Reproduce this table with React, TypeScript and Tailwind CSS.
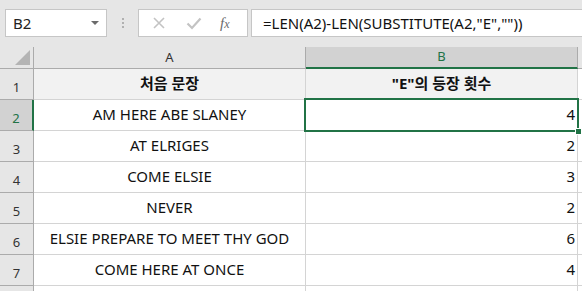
import { ChevronDown } from 'lucide-react';

const rows = [
  { a: 'AM HERE ABE SLANEY', b: 4 },
  { a: 'AT ELRIGES', b: 2 },
  { a: 'COME ELSIE', b: 3 },
  { a: 'NEVER', b: 2 },
  { a: 'ELSIE PREPARE TO MEET THY GOD', b: 6 },
  { a: 'COME HERE AT ONCE', b: 4 },
];

const font = { fontFamily: '"Noto Sans", "Noto Sans CJK KR", sans-serif' };

function FormulaBar() {
  return (
    <div className="h-[47px] flex-none flex items-start pt-[9px] pl-[5px] bg-[#e6e6e6]">
      <div className="w-[102px] h-[28px] bg-white border border-[#c6c6c6] flex items-center justify-between pl-[7px] pr-[5px]">
        <span className="text-[15px] text-[#222]">B2</span>
        <svg width="10" height="6" viewBox="0 0 10 6" className="mr-[1px]">
          <path d="M1 1h8L5 5z" fill="#6b6b6b" />
        </svg>
      </div>
      <div className="w-[31px] h-[28px] flex flex-col items-center justify-center gap-[2px]">
        <span className="w-[2px] h-[2px] bg-[#b0b0b0]" />
        <span className="w-[2px] h-[2px] bg-[#b0b0b0]" />
        <span className="w-[2px] h-[2px] bg-[#b0b0b0]" />
      </div>
      <div className="w-[110px] h-[28px] bg-white border border-[#c6c6c6] flex items-center">
        <svg width="14" height="14" viewBox="0 0 14 14" className="ml-[13px]">
          <path d="M2 2l10 10M12 2L2 12" stroke="#c3c3c3" strokeWidth="1.6" />
        </svg>
        <svg width="16" height="14" viewBox="0 0 16 14" className="ml-[20px]">
          <path d="M1.5 7.5l4.5 4.5 8.5-9.5" stroke="#c3c3c3" strokeWidth="2.2" fill="none" />
        </svg>
        <span
          className="ml-[18px] text-[15px] italic text-[#6b6b6b] leading-none"
          style={{ fontFamily: '"Liberation Serif", serif' }}
        >
          f<span className="text-[12px]">x</span>
        </span>
      </div>
      <div className="flex-1 h-[28px] ml-[3px] bg-white border border-[#c6c6c6] border-r-0 flex items-center pl-[11px]">
        <span className="text-[15px] text-[#111] whitespace-nowrap">
          =LEN(A2)-LEN(SUBSTITUTE(A2,"E",""))
        </span>
      </div>
    </div>
  );
}

function Corner() {
  return (
    <div className="h-[22px] w-[34px] bg-[#e6e6e6] border-r border-b border-[#ababab] relative">
      <svg width="15" height="15" viewBox="0 0 15 15" className="absolute right-[3px] bottom-[3px]">
        <path d="M15 0V15H0z" fill="#b4b4b4" />
      </svg>
    </div>
  );
}

export default function App() {
  return (
    <div className="w-[582px] h-[291px] overflow-hidden bg-white flex flex-col" style={font}>
      <FormulaBar />
      <div className="relative flex-1 overflow-hidden">
        <div className="grid grid-cols-[34px_272px_272px_4px]">
          {/* column headers */}
          <Corner />
          <div className="h-[22px] bg-[#e6e6e6] border-r border-b border-[#ababab] flex items-center justify-center text-[13px] text-[#333]">
            A
          </div>
          <div className="h-[22px] bg-[#d2d2d2] border-r border-[#ababab] border-b-2 border-b-[#217346] flex items-center justify-center text-[13px] text-[#217346]">
            B
          </div>
          <div className="h-[22px] bg-[#e6e6e6] border-b border-[#ababab]" />

          {/* row 1: table header */}
          <div className="h-[31px] bg-[#e6e6e6] border-r border-b border-[#ababab] flex items-end justify-center pb-[2px] text-[13px] text-[#333]">
            1
          </div>
          <div className="h-[31px] bg-[#f2f2f2] border-r border-b border-[#d4d4d4] flex items-end justify-center pb-[5px] text-[15px] font-bold text-[#111]">
            처음 문장
          </div>
          <div className="h-[31px] bg-[#f2f2f2] border-r border-b border-[#d4d4d4] flex items-end justify-center pb-[5px] text-[15px] font-bold text-[#111]">
            "E"의 등장 횟수
          </div>
          <div className="h-[31px] border-b border-[#d4d4d4]" />

          {rows.map((r, i) => {
            const active = i === 0;
            return [
              <div
                key={`h${i}`}
                className={
                  active
                    ? 'h-[31px] bg-[#d2d2d2] border-r-2 border-r-[#217346] border-b border-b-[#ababab] flex items-end justify-center pb-[2px] text-[13px] text-[#217346]'
                    : 'h-[31px] bg-[#e6e6e6] border-r border-b border-[#ababab] flex items-end justify-center pb-[2px] text-[13px] text-[#333]'
                }
              >
                {i + 2}
              </div>,
              <div
                key={`a${i}`}
                className="h-[31px] border-r border-b border-[#d4d4d4] flex items-end justify-center pb-[5px] text-[15px] text-[#111] whitespace-nowrap"
              >
                {r.a}
              </div>,
              <div
                key={`b${i}`}
                className="h-[31px] border-r border-b border-[#d4d4d4] flex items-end justify-end pr-[2px] pb-[5px] text-[15px] text-[#111]"
              >
                {r.b}
              </div>,
              <div key={`c${i}`} className="h-[31px] border-b border-[#d4d4d4]" />,
            ];
          })}

          <div className="h-[31px] bg-[#e6e6e6] border-r border-[#ababab]" />
          <div className="h-[31px] border-r border-[#d4d4d4]" />
          <div className="h-[31px] border-r border-[#d4d4d4]" />
          <div className="h-[31px]" />
        </div>

        {/* selection box on B2 with fill handle */}
        <div className="absolute left-[304px] top-[51px] w-[275px] h-[34px] border-2 border-[#217346] pointer-events-none" />
        <div className="absolute left-[575px] top-[81px] w-[7px] h-[7px] bg-[#217346] border border-white" />
      </div>
    </div>
  );
}
